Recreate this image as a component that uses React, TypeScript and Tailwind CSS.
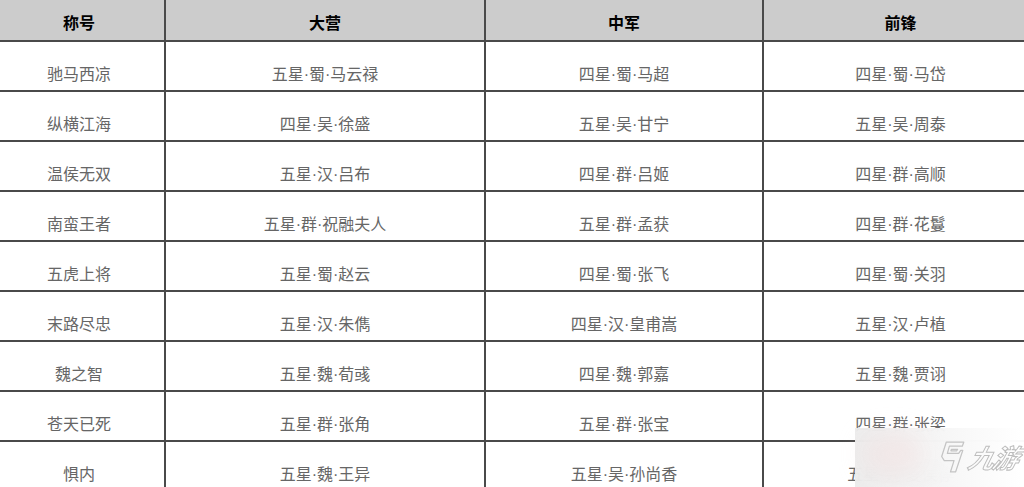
import React from "react";

const header = ["称号", "大营", "中军", "前锋"];
const rows: string[][] = [
  ["驰马西凉", "五星·蜀·马云禄", "四星·蜀·马超", "四星·蜀·马岱"],
  ["纵横江海", "四星·吴·徐盛", "五星·吴·甘宁", "五星·吴·周泰"],
  ["温侯无双", "五星·汉·吕布", "四星·群·吕姬", "四星·群·高顺"],
  ["南蛮王者", "五星·群·祝融夫人", "五星·群·孟获", "四星·群·花鬘"],
  ["五虎上将", "五星·蜀·赵云", "四星·蜀·张飞", "四星·蜀·关羽"],
  ["末路尽忠", "五星·汉·朱儁", "四星·汉·皇甫嵩", "五星·汉·卢植"],
  ["魏之智", "五星·魏·荀彧", "四星·魏·郭嘉", "五星·魏·贾诩"],
  ["苍天已死", "五星·群·张角", "五星·群·张宝", "四星·群·张梁"],
  ["惧内", "五星·魏·王异", "五星·吴·孙尚香", "五星·魏·夏侯惇"],
];

export default function App() {
  return (
    <div
      className="relative w-[1024px] h-[487px] overflow-hidden bg-white"
      style={{ fontFamily: '"Liberation Sans", "Noto Sans CJK SC", sans-serif' }}
    >
      <div className="ml-[-6px] grid grid-cols-[172px_320px_278px_273px]">
        {header.map((h, i) => (
          <div
            key={h}
            className={`h-[42px] bg-[#cccccc] border-b-2 border-[#4a4a4a] ${i < 3 ? "border-r-2" : ""} flex items-center justify-center pt-[8px] text-[16px] font-bold text-black leading-none`}
          >
            {h}
          </div>
        ))}
        {rows.map((r, ri) =>
          r.map((c, ci) => (
            <div
              key={`${ri}-${ci}`}
              className={`h-[50px] border-b-2 border-[#4a4a4a] ${ci < 3 ? "border-r-2" : ""} flex items-center justify-center pt-[17px] text-[16px] text-[#666666] leading-none`}
            >
              {c}
            </div>
          ))
        )}
      </div>

      <div className="absolute left-[855px] top-[428px] w-[169px] h-[59px] bg-gradient-to-r from-[#ebebeb]/95 via-[#f5f5f5]/95 to-white/95 backdrop-blur-md">
        <div className="absolute left-[8px] top-[6px] w-[60px] h-[40px] rounded-full bg-[#f3d9d9]/40 blur-md" />
        <svg
          className="absolute left-[84px] top-[12px]"
          width="27"
          height="34"
          viewBox="0 0 26 33"
          fill="none"
          stroke="#c4c4c4"
          strokeWidth="1.2"
          strokeLinejoin="round"
        >
          <path d="M7 2 L24 2 L22.5 6 L10 6 L8 13 L19 13 L21 10 L23 10 L16 31 L11 31 L14.5 20 L5 20 L2.5 16 Z" />
          <path d="M12 9 L18 9 L17 10.5 L11.5 10.5 Z" />
        </svg>
        <span className="absolute left-[114px] top-[18px] text-[26px] leading-none italic font-bold text-transparent [-webkit-text-stroke:1px_#bdbdbd] skew-x-[-14deg] tracking-[-2px]">
          九游
        </span>
      </div>
    </div>
  );
}
